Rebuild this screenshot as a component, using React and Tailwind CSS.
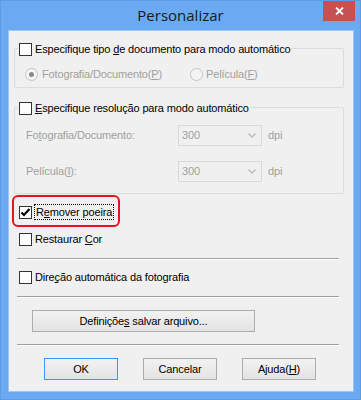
import React from "react";

const font = { fontFamily: '"Liberation Sans", Arial, sans-serif' };

function Check({ checked }) {
  return (
    <div className="w-[13px] h-[13px] shrink-0 border border-[#333333] bg-white flex items-center justify-center">
      {checked && (
        <svg width="11" height="11" viewBox="0 0 11 11">
          <polyline points="1.5,5.5 4,8 9.5,2" fill="none" stroke="#000" strokeWidth="2.2" />
        </svg>
      )}
    </div>
  );
}

function Radio({ selected }) {
  return (
    <div className="w-[13px] h-[13px] shrink-0 rounded-full border border-[#c4c4c4] bg-[#f4f4f4] flex items-center justify-center">
      {selected && <div className="w-[5px] h-[5px] rounded-full bg-[#8a8a8a]" />}
    </div>
  );
}

function U({ children }) {
  return <span className="underline underline-offset-[1px]">{children}</span>;
}

function Sep() {
  return <div className="ml-[8px] w-[322px] h-[2px] border-t border-[#a0a0a0] border-b border-b-white" />;
}

function Select() {
  return (
    <div className="w-[84px] h-[21px] border border-[#d9d9d9] bg-[#f0f0f0] flex items-center justify-between pl-[3px] pr-[5px] text-[#a0a0a0]">
      <span>300</span>
      <svg width="8" height="5" viewBox="0 0 8 5">
        <polyline points="0.5,0.5 4,4 7.5,0.5" fill="none" stroke="#b8b8b8" strokeWidth="1.4" />
      </svg>
    </div>
  );
}

function Btn({ children, w, def }) {
  return (
    <div
      className={`h-[22px] flex items-center justify-center border bg-gradient-to-b from-[#f2f2f2] to-[#e3e3e3] text-black ${
        def ? "border-[#3399ff]" : "border-[#acacac]"
      } ${w}`}
    >
      {children}
    </div>
  );
}

export default function App() {
  return (
    <div
      className="w-[361px] h-[400px] bg-[#6aaaf2] border border-[#5c9be6] flex flex-col text-[11px] leading-[13px] tracking-[-0.15px] text-black"
      style={font}
    >
      {/* Title bar */}
      <div className="h-[29px] grid grid-cols-[1fr_auto_1fr]">
        <div />
        <div
          className="pt-[4px] text-[15px] leading-[20px] tracking-normal text-[#1a1a1a]"
          style={{ fontFamily: '"Open Sans", "Noto Sans", sans-serif' }}
        >
          Personalizar
        </div>
        <div className="flex justify-end pr-[5px]">
          <div className="w-[32px] h-[20px] bg-[#c75050] flex items-center justify-center">
            <svg width="9" height="8" viewBox="0 0 9 8">
              <path d="M1 0.5 L8 7.5 M8 0.5 L1 7.5" stroke="#fff" strokeWidth="1.8" />
            </svg>
          </div>
        </div>
      </div>

      {/* Content panel */}
      <div className="ml-[7px] mr-[6px] h-[362px] border border-[#9cc6f5] bg-[#f0f0f0] flex flex-col">
        {/* Group 1 */}
        <div className="ml-[5px] w-[330px] mt-[17px] border border-[#dcdcdc] rounded-[2px] pb-[6px] flex flex-col">
          <div className="-mt-[6px] ml-[3px] px-[1px] bg-[#f0f0f0] w-fit flex items-center gap-[3px]">
            <Check />
            <span>
              Especifique tipo <U>d</U>e documento para modo automático
            </span>
          </div>
          <div className="mt-[12px] flex items-center text-[#a0a0a0]">
            <div className="ml-[10px] flex items-center gap-[4px]">
              <Radio selected />
              <span>
                Fotografia/Documento(<U>P</U>)
              </span>
            </div>
            <div className="ml-[28px] flex items-center gap-[3px]">
              <Radio />
              <span>
                Película(<U>F</U>)
              </span>
            </div>
          </div>
        </div>

        {/* Group 2 */}
        <div className="ml-[5px] w-[330px] mt-[19px] border border-[#dcdcdc] rounded-[2px] pb-[11px] flex flex-col">
          <div className="-mt-[6px] ml-[3px] px-[1px] bg-[#f0f0f0] w-fit flex items-center gap-[3px]">
            <Check />
            <span>
              <U>E</U>specifique resolução para modo automático
            </span>
          </div>
          <div className="mt-[10px] flex items-center text-[#a0a0a0]">
            <span className="ml-[11px] w-[152px]">
              Fo<U>t</U>ografia/Documento:
            </span>
            <Select />
            <span className="ml-[6px]">dpi</span>
          </div>
          <div className="mt-[15px] flex items-center text-[#a0a0a0]">
            <span className="ml-[11px] w-[152px]">
              Película(<U>I</U>):
            </span>
            <Select />
            <span className="ml-[6px]">dpi</span>
          </div>
        </div>

        {/* Red highlighted checkbox */}
        <div className="ml-[3px] mt-[1px] w-[108px] h-[32px] border-2 border-[#e8141b] rounded-[6px] pt-[7px] pl-[5px]">
          <div className="flex items-center gap-[2px]">
            <Check checked />
            <span className="border border-dotted border-black px-[1px] leading-[14px]">
              R<U>e</U>mover poeira
            </span>
          </div>
        </div>

        <div className="ml-[10px] mt-[6px] flex items-center gap-[3px]">
          <Check />
          <span>
            Restaurar <U>C</U>or
          </span>
        </div>

        <div className="mt-[12px]">
          <Sep />
        </div>

        <div className="ml-[10px] mt-[11px] flex items-center gap-[3px]">
          <Check />
          <span>
            Dire<U>ç</U>ão automática da fotografia
          </span>
        </div>

        <div className="mt-[12px]">
          <Sep />
        </div>

        <div className="ml-[23px] mt-[12px]">
          <Btn w="w-[223px]">
            <span>
              Definiçõe<U>s</U> salvar arquivo...
            </span>
          </Btn>
        </div>

        <div className="mt-[12px]">
          <Sep />
        </div>

        <div className="ml-[35px] mt-[12px] flex gap-[25px]">
          <Btn w="w-[74px]" def>
            OK
          </Btn>
          <Btn w="w-[74px]">Cancelar</Btn>
          <Btn w="w-[74px]">
            <span>
              Ajuda(<U>H</U>)
            </span>
          </Btn>
        </div>
      </div>
    </div>
  );
}
